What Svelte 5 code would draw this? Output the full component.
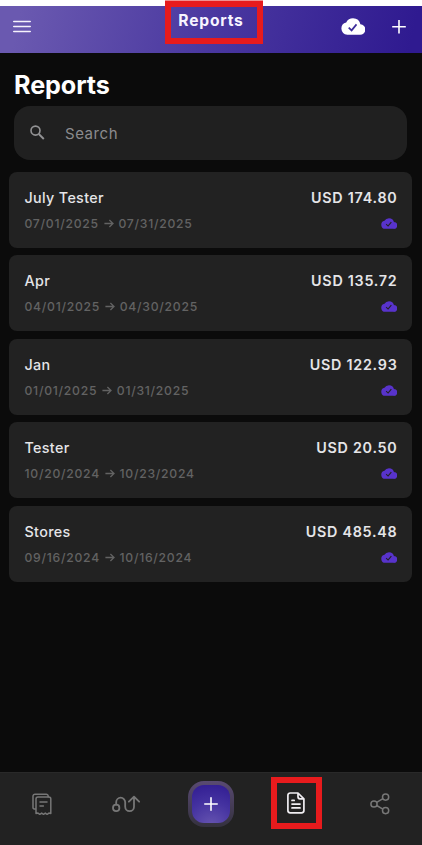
<script>
  const reports = [
    { name: 'July Tester', from: '07/01/2025', to: '07/31/2025', amount: '174.80' },
    { name: 'Apr', from: '04/01/2025', to: '04/30/2025', amount: '135.72' },
    { name: 'Jan', from: '01/01/2025', to: '01/31/2025', amount: '122.93' },
    { name: 'Tester', from: '10/20/2024', to: '10/23/2024', amount: '20.50' },
    { name: 'Stores', from: '09/16/2024', to: '10/16/2024', amount: '485.48' }
  ];
</script>

{#snippet cloud(w, h, check)}
  <svg width={w} height={h} viewBox="0 0 24 17" preserveAspectRatio="none">
    <path fill="currentColor" d="M19.4 6.3A7.6 7.6 0 0 0 12 .2 7.6 7.6 0 0 0 5.2 4.4 6.3 6.3 0 0 0 6.3 16.8h12.5a5.2 5.2 0 0 0 .6-10.5z" />
    <path d="M7.7 9.6l2.9 2.8 4.9-6" fill="none" stroke={check} stroke-width="1.7" />
  </svg>
{/snippet}

<div class="app">
  <header>
    <button class="icon menu" aria-label="Menu">
      <svg width="18" height="14" viewBox="0 0 18 14" fill="none" stroke="#f6f3fc" stroke-width="1.6" stroke-linecap="round">
        <path d="M.8 1.5h16.4M.8 6.5h16.4M.8 11.5h16.4" />
      </svg>
    </button>
    <div class="mark heading">Reports</div>
    <div class="actions">
      {@render cloud(24, 17, '#3d2c9a')}
      <svg width="16" height="16" viewBox="0 0 16 16" stroke="#fff" stroke-width="1.6"><path d="M8 1v13.6M1.2 7.7h13.6" /></svg>
    </div>
  </header>

  <main>
    <h1>Reports</h1>
    <div class="search">
      <svg width="15" height="15" viewBox="0 0 15 15" fill="none" stroke="#929294" stroke-width="1.6">
        <circle cx="5.5" cy="5.6" r="4.5" /><path d="M8.8 9l5 5" stroke-width="1.9" />
      </svg>
      <span>Search</span>
    </div>
    <div class="list">
      {#each reports as r}
        <article>
          <div class="row top"><span class="name">{r.name}</span><span class="amount">USD {r.amount}</span></div>
          <div class="row bottom">
            <span class="date">{r.from}
              <svg class="arrow" width="10" height="9" viewBox="0 0 10 9" fill="none" stroke="currentColor" stroke-width="1.3"><path d="M.4 4.5h8.5M5.4 1l3.6 3.5L5.4 8" /></svg>
              {r.to}</span>
            <span class="sync">{@render cloud(16, 11, '#222')}</span>
          </div>
        </article>
      {/each}
    </div>
  </main>

  <nav>
    <div class="tab receipts">
      <svg width="20" height="23" viewBox="0 0 20 23" fill="none" stroke="currentColor" stroke-width="1.5" stroke-linejoin="round" stroke-linecap="round">
        <path d="M3.4 15.9H2.2A1.2 1.2 0 0 1 1 14.7V3.2A2 2 0 0 1 3 1.2h11.2a2 2 0 0 1 2 2v.6" />
        <path d="M4 20.4V6a2 2 0 0 1 2-2h10.8a2 2 0 0 1 2 2v14.4l-1.9-.3-1.8 1.2-1.8-1.2-1.8 1.2-1.8-1.2-1.9 1.2-1.8-1.2z" />
        <path d="M8 9.1h7M8 12.9h3.4" />
      </svg>
    </div>
    <div class="tab route">
      <svg width="28" height="18" viewBox="0 0 28 18" fill="none" stroke="currentColor" stroke-width="1.8" stroke-linecap="round" stroke-linejoin="round">
        <circle cx="4.2" cy="12.9" r="3.2" />
        <path d="M4.2 9.5V7.2a4.5 4.5 0 0 1 9 0v4.5a4.4 4.4 0 0 0 8.8 0V1.7M16.9 6.7L22 1.6l5.1 5.1" />
      </svg>
    </div>
    <div class="tab">
      <button class="add" aria-label="Add">
        <svg width="14" height="14" viewBox="0 0 14 14" stroke="#fff" stroke-width="1.6" stroke-linecap="round"><path d="M7 .8v12.4M.8 7h12.4" /></svg>
      </button>
    </div>
    <div class="tab">
      <div class="mark active">
        <svg width="18" height="22" viewBox="0 0 18 22" fill="none" stroke="#f0eef2" stroke-width="1.7" stroke-linejoin="round" stroke-linecap="round">
          <path d="M11 1H3.2A2.3 2.3 0 0 0 .9 3.3v15.2a2.3 2.3 0 0 0 2.3 2.3h11.4a2.3 2.3 0 0 0 2.3-2.3V6.8zV4.8a2 2 0 0 0 2 2h3.7" />
          <path d="M5 8.4h2.2M5 12.1h8M5 15.9h8" />
        </svg>
      </div>
    </div>
    <div class="tab share">
      <svg width="20" height="22" viewBox="0 0 20 22" fill="none" stroke="currentColor" stroke-width="1.5">
        <circle cx="4" cy="11" r="3.1" /><circle cx="15.6" cy="4.1" r="3.1" /><circle cx="15.6" cy="17.6" r="3.1" />
        <path d="M6.7 9.4l6.2-3.7M6.7 12.5l6.2 3.6" />
      </svg>
    </div>
  </nav>
</div>

<style>
  :global(body) { background: #fff; }
  .app {
    box-sizing: border-box;
    width: 422px;
    height: 845px;
    padding-top: 6px;
    display: flex;
    flex-direction: column;
    overflow: hidden;
    font-family: Inter, "Liberation Sans", sans-serif;
    color: #e5e5e8;
  }
  svg { display: block; flex: none; }
  button { border: 0; padding: 0; background: none; }
  header {
    height: 47px;
    flex: none;
    display: grid;
    grid-template-columns: 165px 98px 1fr;
    background: linear-gradient(103deg, #6a59b0 5%, #4a38a0 50%, #2f1a90 97%);
  }
  .menu { width: 18px; height: 14px; margin: 14px 0 0 13px; }
  .mark { box-sizing: border-box; border: 6px solid #e71b1d; display: flex; align-items: center; justify-content: center; }
  .heading {
    height: 43px;
    margin-top: -5px;
    padding: 0 6px 5px 0;
    box-shadow: 0 -1px #f08f8f;
    font-size: 15.6px;
    font-weight: 650;
    letter-spacing: .8px;
    color: #f7f4ff;
  }
  .actions { display: flex; justify-content: flex-end; align-items: flex-start; gap: 26px; padding: 12px 15px 0 0; color: #fff; }
  .actions :global(svg:last-child) { margin-top: 1px; }
  main { flex: 1; background: #0b0b0b; }
  h1 { margin: 0; padding: 17px 14px 0; height: 36px; font-size: 25.2px; line-height: 30.5px; font-weight: 700; letter-spacing: -.1px; color: #fff; }
  .search {
    box-sizing: border-box;
    height: 54px;
    margin: 0 15.5px 0 14px;
    padding-left: 16px;
    display: flex;
    align-items: center;
    gap: 20px;
    border-radius: 16px;
    background: #202020;
    color: #8b8b8e;
    font-size: 15px;
    letter-spacing: .55px;
  }
  .search svg { margin-top: -1px; }
  .list { display: flex; flex-direction: column; gap: 7.6px; padding: 11.5px 10px 0 9px; }
  article { box-sizing: border-box; height: 76px; padding: 16.5px 15px 0 15.5px; border-radius: 8px; background: #222; }
  .row { display: flex; justify-content: space-between; align-items: center; }
  .top { height: 18px; font-size: 14.3px; }
  .name { font-weight: 450; letter-spacing: .35px; }
  .amount { font-weight: 600; letter-spacing: .75px; margin-right: -.5px; }
  .bottom { height: 16px; margin-top: 9px; }
  .date { display: flex; align-items: center; gap: 4.8px; font-size: 12.2px; font-weight: 500; letter-spacing: .74px; color: #636363; }
  .sync { color: #5833cb; }
  nav {
    box-sizing: border-box;
    height: 73px;
    flex: none;
    display: grid;
    grid-template-columns: repeat(5, 1fr);
    padding: 0 0 10px;
    background: #222;
    border-top: 1px solid #292929;
    color: #777;
  }
  .tab { display: flex; align-items: center; justify-content: center; }
  .receipts { padding-right: 1px; }
  .route { padding-right: 2px; }
  .add {
    box-sizing: border-box;
    width: 46px;
    height: 46px;
    padding: 4px;
    border-radius: 16px;
    display: flex;
    align-items: center;
    justify-content: center;
    border: 4px solid transparent;
    background: radial-gradient(circle at 50% 110%, #6856b1, #4432a0 55%, #301b91) padding-box, linear-gradient(#594a72, #34313e) border-box;
  }
  .active { width: 51px; height: 52px; margin: -3px 0 0 2px; }
</style>
